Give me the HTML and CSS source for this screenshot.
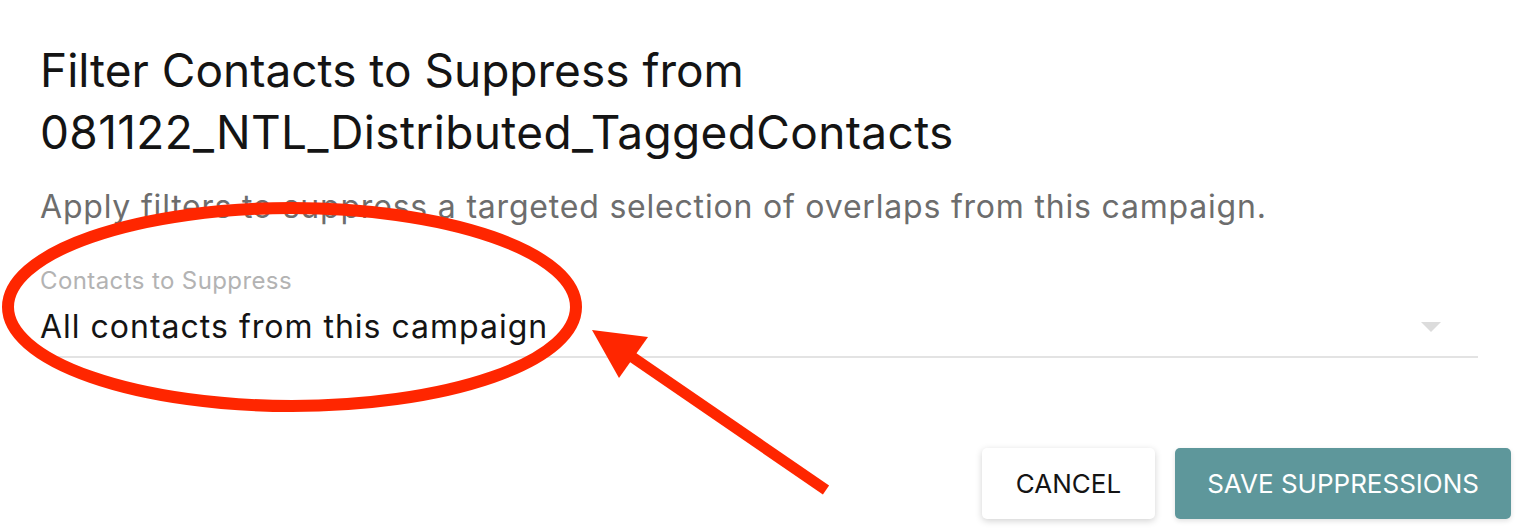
FILE: index.html
```html
<!DOCTYPE html>
<html lang="en">
<head>
    <meta charset="UTF-8">
    <meta name="viewport" content="width=device-width, initial-scale=1.0">
    <title>Filter Contacts to Suppress</title>
    <link rel="stylesheet" href="styles.css">
</head>
<body>

<div class="dialog">
    <div class="content">
        <h1 class="title">Filter Contacts to Suppress from<br><span class="campaign">081122_NTL_Distributed_TaggedContacts</span></h1>
        <p class="desc">Apply filters to suppress a targeted selection of overlaps from this campaign.</p>

        <div class="field">
            <div class="field-label">Contacts to Suppress</div>
            <div class="select">
                <span class="value">All contacts from this campaign</span>
                <span class="caret"></span>
            </div>
        </div>
    </div>

    <div class="actions">
        <button class="btn cancel">CANCEL</button>
        <button class="btn save">SAVE SUPPRESSIONS</button>
    </div>
</div>

<!-- red markup drawn over the screenshot -->
<svg class="markup" width="1524" height="530" viewBox="0 0 1524 530">
    <ellipse cx="292" cy="307" rx="284" ry="99" fill="none" stroke="#ff2600" stroke-width="12"/>
    <line x1="826" y1="490" x2="622" y2="350" stroke="#ff2600" stroke-width="11"/>
    <polygon points="592,330 648,337 619,378" fill="#ff2600"/>
</svg>

</body>
</html>
```
FILE: styles.css
```css
body {
    margin: 0;
    font-family: Inter, "Noto Sans", sans-serif;
    background-color: #fff;
    color: #141414;
}

.dialog {
    width: 1524px;
    height: 530px;
    overflow: hidden;
}

.content {
    padding: 39px 46px 0 40px;
}

.title {
    margin: 0;
    font-size: 46px;
    font-weight: 400;
    line-height: 62px;
    color: #141414;
}

.campaign {
    letter-spacing: 0.35px;
}

.desc {
    margin: 20px 0 0;
    font-size: 32px;
    line-height: 48px;
    letter-spacing: 0.8px;
    color: #6d6d6d;
}

.field {
    margin-top: 34px;
}

.field-label {
    font-size: 24px;
    line-height: 32px;
    letter-spacing: 0.4px;
    color: #b3b3b3;
}

.select {
    margin-top: 8px;
    padding-bottom: 7px;
    display: flex;
    align-items: center;
    justify-content: space-between;
    border-bottom: 2px solid #e3e3e3;
}

.value {
    font-size: 32px;
    line-height: 44px;
    letter-spacing: 1px;
    color: #141414;
}

.caret {
    width: 0;
    height: 0;
    margin-right: 37px;
    border-left: 10px solid transparent;
    border-right: 10px solid transparent;
    border-top: 10px solid #dcdcdc;
}

.actions {
    display: flex;
    justify-content: flex-end;
    gap: 20px;
    padding: 90px 13px 0 0;
}

.btn {
    height: 71px;
    padding: 0 34px;
    font-family: Inter, "Noto Sans", sans-serif;
    font-size: 26px;
    font-weight: 400;
    border: none;
    border-radius: 5px;
    cursor: pointer;
}

.cancel {
    background-color: #fff;
    color: #141414;
    box-shadow: 0 2px 7px rgba(0, 0, 0, 0.18);
}

.save {
    padding: 0 32px;
    background-color: #5e979b;
    color: #fff;
    box-shadow: 0 2px 5px rgba(0, 0, 0, 0.12);
}

.markup {
    position: absolute;
    top: 0;
    left: 0;
    pointer-events: none;
}
```
